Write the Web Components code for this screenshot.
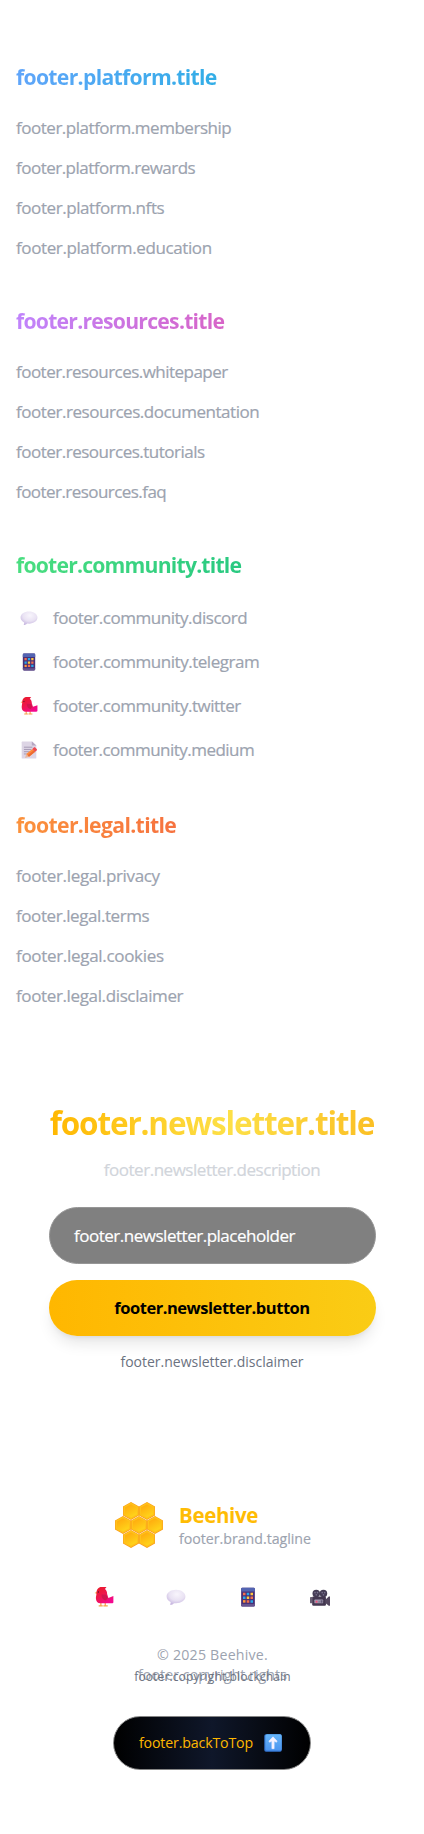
<!DOCTYPE html>
<html lang="en"><head><meta charset="utf-8"><title>Beehive</title>
<style>
html,body{margin:0;background:#fff}
body{font-family:"Open Sans","Noto Sans",sans-serif;color:#9ca3af}
</style></head><body>
<site-footer></site-footer>
<script>
const define=(n,c)=>customElements.define(n,c);
const mount=(el,html)=>{const t=document.createElement('template');t.innerHTML=html;el.attachShadow({mode:'open'}).append(t.content.cloneNode(true));};

/* Text tracked out or in to fill a given width. */
define('fit-text',class extends HTMLElement{
 constructor(){super();mount(this,`<style>:host{display:inline-block;white-space:nowrap}</style><slot></slot>`);}
 connectedCallback(){requestAnimationFrame(()=>this.fit());this.fit();}
 fit(){const w=+this.getAttribute('w'),n=this.textContent.length;if(!w||!n)return;
  this.style.letterSpacing='0.0001px';const r=this.getBoundingClientRect().width;
  if(r)this.style.letterSpacing=((w-r)/n)+'px';}
});

const hex=(x,y)=>`<path d="M${x} ${y-9}L${x+8} ${y-4.5}V${y+4.5}L${x} ${y+9}L${x-8} ${y+4.5}V${y-4.5}Z" fill="#f99a1c"/><path d="M${x} ${y-8.4}L${x+7.5} ${y-4.2}V${y+4.1}L${x} ${y+8.3}L${x-7.5} ${y+4.1}V${y-4.2}Z" fill="#ffc21a"/><path d="M${x} ${y-6.8}L${x+6} ${y-3.4}V${y+3.2}L${x} ${y+6.600}L${x-6} ${y+3.2}V${y-3.4}Z" fill="url(#h)"/>`;
const ICONS={
bubble:['0 0 32 32',`<defs><radialGradient id="b" cx=".55" cy=".3" r=".75"><stop offset="0" stop-color="#f8f5fc"/><stop offset=".55" stop-color="#e9e2f3"/><stop offset="1" stop-color="#c2b0dd"/></radialGradient></defs><path d="M16 4.500C24.500 4.500 31 9 31 15.300S24.500 26 16 26c-1 0-2-.1-3-.2-1.500 1.400-3.800 2.700-5.700 2.600-.7 0-.9-.7-.5-1.300.7-1 .9-2 .6-3C3.500 22.200 1 19 1 15.300 1 9 7.500 4.500 16 4.500Z" fill="url(#b)"/>`],
phone:['0 0 32 32',`<rect x="5" y="1" width="22" height="30" rx="2" fill="#483078"/><path d="M5 7V3a2 2 0 0 1 2-2h18a2 2 0 0 1 2 2v4Z" fill="#5364b2"/><path d="M5 27h22v2a2 2 0 0 1-2 2H7a2 2 0 0 1-2-2Z" fill="#66558f"/><g><path d="M8 9h4v4H8ZM14 21h4v4h-4ZM20 15h4v4h-4Z" fill="#f2704e"/><path d="M14 9h4v4h-4ZM8 15h4v4H8ZM20 21h4v4h-4Z" fill="#28a9e8"/><path d="M20 9h4v4h-4ZM14 15h4v4h-4Z" fill="#ffc83d"/><path d="M8 21h4v4H8Z" fill="#ff9838"/></g>`],
bird:['0 0 32 32',`<defs><linearGradient id="r" x2=".7" y2="1"><stop stop-color="#e91b25"/><stop offset=".5" stop-color="#ee174d"/><stop offset="1" stop-color="#f3088f"/></linearGradient></defs><path d="M11 25v5.300H7.500M18 25v5.300h4M11 30.300h3M18 30.300h-3" fill="none" stroke="#f6a14a" stroke-width="2"/><path d="M5 7 1 9.500 5 11Z" fill="#f6ad4a"/><path d="M4 9C4 4 7 0 12 0h8c-1 1-1.500 2-2.500 3 2.500 2 3.500 5 3.500 8l2 6.500 8-3v10c0 1-1 1.500-2 1.500H10c-4 0-7-3-7-8 0-3 1-5 1-9Z" fill="url(#r)"/><path d="M12 12c0 5 2 8.500 7 9.500l3-4-2.500-5Z" fill="#cf164d"/><circle cx="7" cy="8" r="1.100" fill="#4a1834"/>`],
memo:['0 0 32 32',`<path d="M3 2a1 1 0 0 1 1-1h18l7 7v22a1 1 0 0 1-1 1H4a1 1 0 0 1-1-1Z" fill="#ddd5e5"/><path d="M21 1v7h8Z" fill="#b5a7c2"/><path d="M7 11h15M7 15h13M7 19h10M7 23h5" stroke="#998ba8" stroke-width="1.400"/><path d="m9 30 2-7 5 5Z" fill="#e6b7a0"/><path d="m11 23 11-9 5 5-11 9Z" fill="#ff8a3c"/><path d="m13.500 25.500 11-9 2.500 2.500-11 9Z" fill="#ec6b32"/><path d="m22 14 2.500-2.300c1-.9 2-.7 3 .1l2.200 2.200c.8 1 .8 2-.2 2.800L27 19Z" fill="#f0474f"/>`],
camera:['0 0 32 32',`<circle cx="10" cy="10.500" r="6" fill="#453c55"/><circle cx="21.500" cy="10.500" r="6" fill="#453c55"/><g fill="#77708c"><circle cx="8" cy="9" r="1.300"/><circle cx="12" cy="9" r="1.300"/><circle cx="10" cy="12.500" r="1.300"/><circle cx="19.500" cy="9" r="1.300"/><circle cx="23.500" cy="9" r="1.300"/><circle cx="21.500" cy="12.500" r="1.300"/></g><path d="M1 16h3v10H1a1 1 0 0 1-1-1v-8a1 1 0 0 1 1-1Z" fill="#6a6075"/><rect x="3.500" y="15" width="22" height="15" rx="2" fill="#433750"/><path d="M25 20l5-5h2v15h-2l-5-4Z" fill="#54475f"/><rect x="7" y="20" width="14" height="6" rx="1" fill="#a29ab1"/><path d="M9 22h3v3H9Z" fill="#f14c74"/><path d="M14 22h1v3h-1ZM17 21h3v4h-3Z" fill="#605774"/>`],
up:['0 0 32 32',`<defs><linearGradient id="u" x2="0" y2="1"><stop stop-color="#66b6fa"/><stop offset="1" stop-color="#4c95f0"/></linearGradient></defs><rect x=".5" y=".5" width="31" height="31" rx="3" fill="#3577d4"/><rect x="2.500" y=".500" width="29" height="29" rx="3" fill="url(#u)"/><path d="m16 5 7.500 8-1.700 1.600L18 12.500V26h-4V12.500l-3.800 2.100L8.500 13Z" fill="#f5f1ff" stroke="#f5f1ff" stroke-linejoin="round"/>`],
honey:['0 0 48 46',`<defs><linearGradient id="h" x2=".5" y2="1"><stop stop-color="#ffa50c"/><stop offset="1" stop-color="#ffd31a"/></linearGradient></defs>${[[16,9],[32,9],[8,23],[24,23],[40,23],[16,37],[32,37]].map(p=>hex(...p)).join('')}`]
};
define('emoji-icon',class extends HTMLElement{
 constructor(){super();const [vb,p]=ICONS[this.getAttribute('name')];
 mount(this,`<style>:host{display:block;width:var(--s,18px);height:var(--h,var(--s,18px));flex:none}svg{display:block;width:100%;height:100%}</style><svg viewBox="${vb}" aria-hidden="true">${p}</svg>`);}
});

define('link-row',class extends HTMLElement{
 constructor(){super();const i=this.getAttribute('icon');
 mount(this,`<style>:host{display:flex;align-items:center;height:${i?32:28}px;font-size:17px;line-height:28px;color:#9ca3af;-webkit-text-stroke:.2px #9ca3af}
 .i{width:25px;margin-right:12px;display:flex;justify-content:center}</style>${i?`<span class="i"><emoji-icon name="${i}"></emoji-icon></span>`:''}<slot></slot>`);}
});
define('link-group',class extends HTMLElement{
 constructor(){super();mount(this,`<style>:host{display:flex;flex-direction:column;gap:21px}
 h3{margin:0;font-size:21.200px;line-height:32px;font-weight:700;color:transparent;background:linear-gradient(to right,${this.getAttribute('from')},${this.getAttribute('to')});-webkit-background-clip:text;background-clip:text}
 div{display:flex;flex-direction:column;gap:12px}</style><h3><fit-text w="${this.getAttribute('w')}">${this.getAttribute('heading')}</fit-text></h3><div><slot></slot></div>`);}
});
define('news-letter',class extends HTMLElement{
 constructor(){super();mount(this,`<style>:host{display:flex;flex-direction:column;align-items:center;margin:0 49px;text-align:center}
 h2{margin:0;width:326px;font-size:31.500px;line-height:40px;font-weight:700;color:transparent;background:linear-gradient(to right,#ffb700,#fde047 55%,#fbbf24);-webkit-background-clip:text;background-clip:text}
 .d{margin-top:13px;font-size:17px;line-height:28px;color:#d1d5db;-webkit-text-stroke:.2px #d1d5db}
 .in{box-sizing:border-box;width:327px;height:57px;margin-top:23px;border:1px solid #969696;border-radius:29px;background:#808080;color:#fff;font-size:17px;line-height:55px;padding-left:24.500px;text-align:left;-webkit-text-stroke:.2px #fff}
 .btn{width:327px;height:56px;margin-top:16px;border-radius:28px;background:linear-gradient(to right,#ffb700,#facc15);box-shadow:0 10px 15px -3px #0000001a,0 4px 6px -4px #0000001a;color:#000;font-size:16.500px;font-weight:700;line-height:56px}
 .s{margin-top:16px;font-size:14px;line-height:20px;color:#6b7280}</style>
 <h2><fit-text w="324.500">footer.newsletter.title</fit-text></h2>
 <div class="d"><fit-text w="216.500">footer.newsletter.description</fit-text></div>
 <div class="in"><fit-text w="221">footer.newsletter.placeholder</fit-text></div>
 <div class="btn"><fit-text w="195.500">footer.newsletter.button</fit-text></div>
 <div class="s"><fit-text w="183">footer.newsletter.disclaimer</fit-text></div>`);}
});
define('brand-block',class extends HTMLElement{
 constructor(){super();mount(this,`<style>:host{display:flex;justify-content:center;align-items:center;gap:16px;padding-left:2px}
 emoji-icon{--s:48px;--h:46px}
 div{display:flex;flex-direction:column}
 b{font-size:20.500px;line-height:28px;font-weight:700;color:#ffbc05}
 span{font-size:14.200px;line-height:20px;color:#9ca3af;-webkit-text-stroke:.15px #9ca3af}</style>
 <emoji-icon name="honey"></emoji-icon><div><b><fit-text w="79">Beehive</fit-text></b><span><fit-text w="132">footer.brand.tagline</fit-text></span></div>`);}
});
define('social-row',class extends HTMLElement{
 constructor(){super();mount(this,`<style>:host{display:flex;justify-content:center;gap:51.700px;--s:20px}</style>
 ${['bird','bubble','phone','camera'].map(n=>`<emoji-icon name="${n}"></emoji-icon>`).join('')}`);}
});
define('copy-right',class extends HTMLElement{
 constructor(){super();mount(this,`<style>:host{display:flex;flex-direction:column;align-items:center;font-size:14.200px;line-height:20px;color:#9ca3af;padding-left:1px}
 small{font-size:12px;line-height:16px;margin-top:-16px;color:#6b7280}</style>
 <fit-text w="111">© 2025 Beehive.</fit-text><fit-text w="149">footer.copyright.rights</fit-text><small><fit-text w="156.500">footer.copyright.blockchain</fit-text></small>`);}
});
define('back-top',class extends HTMLElement{
 constructor(){super();mount(this,`<style>:host{box-sizing:border-box;display:flex;align-items:center;justify-content:center;gap:11px;width:198px;height:54px;padding-right:3px;border:1px solid #858585;border-radius:27px;background:linear-gradient(to right,#000,#0f172a 50%,#000);color:#ffb700;font-size:14.200px;line-height:20px}</style>
 <fit-text w="114">footer.backToTop</fit-text><emoji-icon name="up"></emoji-icon>`);}
});
define('site-footer',class extends HTMLElement{
 constructor(){super();
 const row=([t,w,i])=>`<link-row${i?` icon="${i}"`:''}><fit-text w="${w-.8}">${t}</fit-text></link-row>`;
 const group=(k,w,a,b,rows)=>`<link-group heading="footer.${k}.title" w="${w-.8}" from="${a}" to="${b}">${rows.map(r=>row([`footer.${k}.${r[0]}`,r[1],r[2]])).join('')}</link-group>`;
 mount(this,`<style>:host{display:block;box-sizing:border-box;height:1834px;padding-top:61px;overflow:hidden}
 nav{display:flex;flex-direction:column;gap:43px;padding:0 16px}
 news-letter{margin-top:93px}brand-block{margin-top:129px}social-row{margin-top:38px}copy-right{margin-top:38px}back-top{margin:31px auto 0}</style>
 <nav>${group('platform',201.5,'#60a5fa','#06b6d4',[['membership',216],['rewards',180],['nfts',149],['education',196.5]])}
 ${group('resources',209,'#c084fc','#ec4899',[['whitepaper',212.5],['documentation',244],['tutorials',189.5],['faq',151]])}
 ${group('community',226,'#4ade80','#10b981',[['discord',195,'bubble'],['telegram',207,'phone'],['twitter',188.5,'bird'],['medium',202,'memo']])}
 ${group('legal',161,'#fb923c','#ef4444',[['privacy',144.5],['terms',134],['cookies',148.5],['disclaimer',168]])}</nav>
 <news-letter></news-letter><brand-block></brand-block><social-row></social-row><copy-right></copy-right><back-top></back-top>`);}
});
</script></body></html>
